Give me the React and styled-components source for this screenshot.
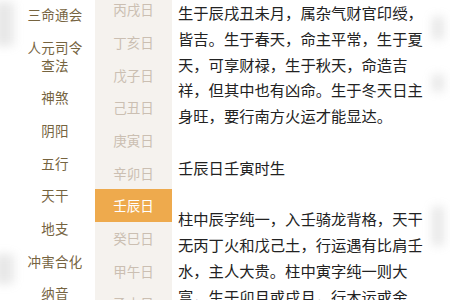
import React from "react";
import styled, { createGlobalStyle } from "styled-components";

const GlobalStyle = createGlobalStyle`
  html, body {
    margin: 0;
    padding: 0;
    background: #ffffff;
    overflow: hidden;
  }
  body {
    font-family: "Noto Sans CJK SC", "Noto Sans", sans-serif;
  }
`;

const categories = [
  ["三命通会"],
  ["人元司令", "查法"],
  ["神煞"],
  ["阴阳"],
  ["五行"],
  ["天干"],
  ["地支"],
  ["冲害合化"],
  ["纳音"],
];

const days = [
  "丙戌日",
  "丁亥日",
  "戊子日",
  "己丑日",
  "庚寅日",
  "辛卯日",
  "壬辰日",
  "癸巳日",
  "甲午日",
  "乙未日",
];

const paragraphs = [
  "生于辰戌丑未月，属杂气财官印绶，皆吉。生于春天，命主平常，生于夏天，可享财禄，生于秋天，命造吉祥，但其中也有凶命。生于冬天日主身旺，要行南方火运才能显达。",
  "壬辰日壬寅时生",
  "柱中辰字纯一，入壬骑龙背格，天干无丙丁火和戊己土，行运遇有比肩壬水，主人大贵。柱中寅字纯一则大富，生于卯月或戌月，行木运或金",
];

// soft grey blotches that sit over the edges of the screenshot
const smudges = [
  { left: -6, top: 2, width: 20, height: 44 },
  { left: -6, top: 254, width: 20, height: 30 },
  { left: 432, top: 16, width: 12, height: 24 },
  { left: 432, top: 74, width: 12, height: 18 },
  { left: 432, top: 206, width: 12, height: 40 },
];

const App = () => {
  return (
    <>
      <GlobalStyle />
      <Page>
        <CategoryColumn>
          {categories.map((lines) => (
            <CategoryItem key={lines[0]}>
              {lines.map((l) => (
                <span key={l}>{l}</span>
              ))}
            </CategoryItem>
          ))}
        </CategoryColumn>
        <DayColumn>
          {days.map((d) => (
            <DayItem key={d} $active={d === "壬辰日"}>
              {d}
            </DayItem>
          ))}
        </DayColumn>
        <Content>
          {paragraphs.map((p) => (
            <Paragraph key={p}>{p}</Paragraph>
          ))}
        </Content>
        {smudges.map((s, i) => (
          <Smudge key={i} style={s} />
        ))}
      </Page>
    </>
  );
};

export default App;

const Page = styled.div`
  position: relative;
  width: 450px;
  height: 300px;
  overflow: hidden;
  display: flex;
  background: #ffffff;
`;

const CategoryColumn = styled.div`
  width: 95px;
  flex-shrink: 0;
  box-sizing: border-box;
  padding-left: 15px;
  margin-top: -2.4px;
  display: flex;
  flex-direction: column;
`;

const CategoryItem = styled.div`
  display: flex;
  flex-direction: column;
  align-items: center;
  padding: 7.35px 0;
  font-size: 13.5px;
  line-height: 18px;
  color: #76643f;
  letter-spacing: 0.2px;
`;

const DayColumn = styled.div`
  width: 77px;
  flex-shrink: 0;
  background: #f5f2ee;
  margin-top: -7.2px;
  display: flex;
  flex-direction: column;
`;

const DayItem = styled.div`
  height: 32.7px;
  flex-shrink: 0;
  display: flex;
  align-items: center;
  justify-content: center;
  font-size: 13.5px;
  color: ${(p) => (p.$active ? "#ffffff" : "#cbbfb2")};
  background: ${(p) => (p.$active ? "#eeaa4d" : "transparent")};
`;

const Content = styled.div`
  width: 250px;
  padding-left: 6px;
  flex-shrink: 0;
`;

const Paragraph = styled.p`
  margin: 0 0 25.8px;
  font-size: 15.3px;
  line-height: 25.8px;
  color: #222222;
`;

const Smudge = styled.div`
  position: absolute;
  background: rgba(140, 140, 140, 0.2);
  filter: blur(5px);
  border-radius: 4px;
`;
